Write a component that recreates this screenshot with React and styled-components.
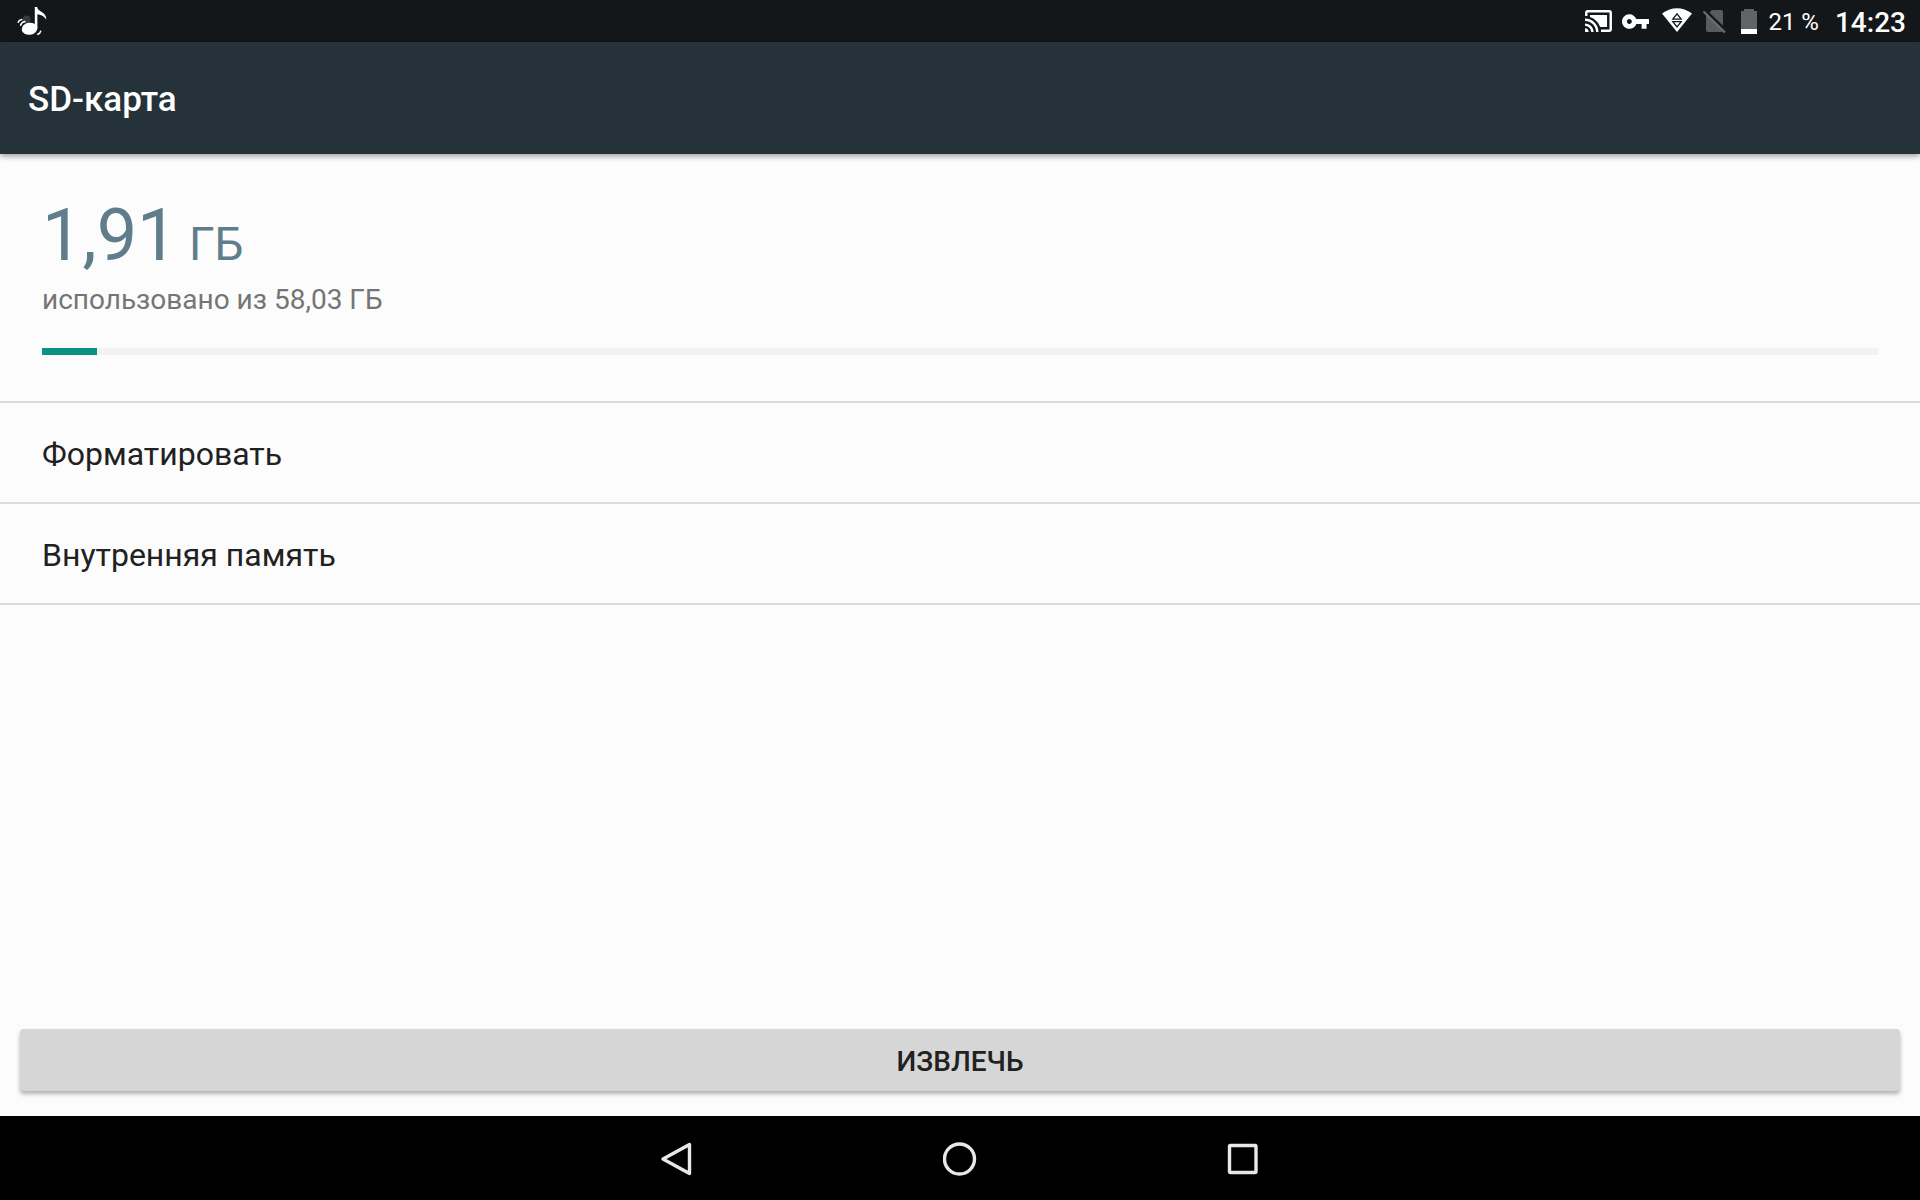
import React from 'react';
import styled, { createGlobalStyle } from 'styled-components';

const storage = {
  title: 'SD-карта',
  used: '1,91',
  unit: 'ГБ',
  summary: 'использовано из 58,03 ГБ',
  percent: 3
};

const actions = ['Форматировать', 'Внутренняя память'];

const App = () => (
  <Screen>
    <GlobalStyle />
    <StatusBar>
      <NoteIcon />
      <StatusIcons>
        <CastIcon />
        <KeyIcon />
        <WifiIcon />
        <NoSimIcon />
        <BatteryIcon />
        <BatteryLevel>21 %</BatteryLevel>
        <Clock>14:23</Clock>
      </StatusIcons>
    </StatusBar>
    <AppBar>
      <Title>{storage.title}</Title>
    </AppBar>
    <Content>
      <Usage>
        <UsedSize>
          {storage.used}
          <Unit> {storage.unit}</Unit>
        </UsedSize>
        <Summary id="usage-summary">{storage.summary}</Summary>
        <Track
          role="progressbar"
          aria-labelledby="usage-summary"
          aria-valuenow={storage.percent}
          aria-valuemin={0}
          aria-valuemax={100}
        >
          <Fill style={{ width: `${storage.percent}%` }} />
        </Track>
      </Usage>
      <ActionList>
        {actions.map(action => (
          <ActionItem key={action}>
            <ActionButton type="button">{action}</ActionButton>
          </ActionItem>
        ))}
      </ActionList>
    </Content>
    <Footer>
      <EjectButton type="button">Извлечь</EjectButton>
    </Footer>
    <NavBar>
      <NavButton type="button" aria-label="Назад">
        <svg width="34" height="34" viewBox="0 0 34 34">
          <path d="M29.500 2.500V31.500L3 17Z" />
        </svg>
      </NavButton>
      <NavButton type="button" aria-label="Домой">
        <svg width="34" height="34" viewBox="0 0 34 34">
          <circle cx="16.500" cy="17" r="15" />
        </svg>
      </NavButton>
      <NavButton type="button" aria-label="Недавние">
        <svg width="34" height="34" viewBox="0 0 34 34">
          <rect x="3.500" y="3.500" width="26.500" height="27" rx="1" />
        </svg>
      </NavButton>
    </NavBar>
  </Screen>
);

export default App;

const NoteIcon = () => (
  <svg width="30" height="30" viewBox="0 0 30 30" fill="#fff" aria-hidden="true">
    <circle cx="9.500" cy="13.500" r="4" fill="#34393c" />
    <ellipse cx="12.500" cy="22.800" rx="7.800" ry="6" transform="rotate(-8 12.500 22.800)" />
    <path d="M17.800 1H20.200C20.600 6 29.500 5.500 29.300 13.500C26.500 9.800 23.500 8.500 20.400 8.300V23H17.800Z" />
    <path
      d="M1.200 16.200Q2 13.800 4.800 13.400M3.600 19.200Q4.600 16.200 8 15.600M20.800 28.200Q23.200 27.600 23.700 25.200"
      fill="none"
      stroke="#fff"
      strokeWidth="1.500"
      strokeLinecap="round"
    />
  </svg>
);

const CastIcon = () => (
  <svg width="27" height="22" viewBox="1 3 22 18" fill="#fff" aria-hidden="true">
    <path d="M1 18v3h3c0-1.660-1.340-3-3-3zm0-4v2c2.760 0 5 2.240 5 5h2c0-3.870-3.130-7-7-7zm18-7H5v1.630c3.960 1.280 7.090 4.410 8.370 8.370H19V7zM1 10v2c4.970 0 9 4.030 9 9h2c0-6.080-4.930-11-11-11zm20-7H3c-1.100 0-2 .9-2 2v3h2V5h18v14h-7v2h7c1.100 0 2-.9 2-2V5c0-1.100-.9-2-2-2z" />
  </svg>
);

const KeyIcon = () => (
  <svg width="27" height="15" viewBox="1 6 22 12" fill="#fff" aria-hidden="true">
    <path d="M12.650 10C11.830 7.670 9.610 6 7 6c-3.310 0-6 2.690-6 6s2.690 6 6 6c2.610 0 4.830-1.670 5.650-4H17v4h4v-4h2v-4H12.650zM7 14c-1.100 0-2-.9-2-2s.9-2 2-2 2 .9 2 2-.9 2-2 2z" />
  </svg>
);

const WifiIcon = () => (
  <svg width="34" height="26" viewBox="-3 0 34 26" aria-hidden="true">
    <path d="M15 24L0 5.500Q15 -5 30 5.500Z" fill="#fff" />
    <path
      d="M15 5.800L19.200 11.200H10.800ZM15 18.900L19.200 13.600H10.800Z"
      fill="none"
      stroke="#13171a"
      strokeWidth="1.300"
    />
  </svg>
);

const NoSimIcon = () => (
  <svg width="28" height="24" viewBox="0 0 28 24" aria-hidden="true">
    <path
      d="M9 1H18Q20 1 20 3V21Q20 23 18 23H5Q3 23 3 21V7Z"
      fill="#595c5e"
    />
    <path d="M1.500 0.500L24 22.500" stroke="#13171a" strokeWidth="2.600" />
    <path d="M0.500 2.500L22 23.500" stroke="#6c6f71" strokeWidth="2.200" />
  </svg>
);

const BatteryIcon = () => (
  <svg width="17" height="25" viewBox="0 0 17 25" aria-hidden="true">
    <path d="M3 0H13V2H16V20H0V2H3Z" fill="#616365" />
    <path d="M0 20H16V25H0Z" fill="#fff" />
  </svg>
);

const GlobalStyle = createGlobalStyle`
  * {
    box-sizing: border-box;
  }

  body {
    margin: 0;
    font-family: Roboto, sans-serif;
    color: #212121;
    background: #fcfcfc;
  }

  button {
    border: 0;
    font-family: inherit;
    color: inherit;
    cursor: pointer;
  }
`;

const Screen = styled.div`
  display: flex;
  flex-direction: column;
  min-height: 100vh;
`;

const StatusBar = styled.div`
  display: flex;
  align-items: center;
  justify-content: space-between;
  height: 42px;
  padding: 0 14px 0 17px;
  color: #fff;
  background: #13171a;
`;

const StatusIcons = styled.div`
  display: flex;
  align-items: center;
  gap: 10px;
`;

const BatteryLevel = styled.span`
  padding-top: 2px;
  font-size: 24px;
`;

const Clock = styled.span`
  margin-left: 6px;
  padding-top: 2px;
  font-size: 28px;
  font-weight: 500;
`;

const AppBar = styled.header`
  display: flex;
  align-items: center;
  height: 112px;
  padding: 2px 28px 0;
  color: #fff;
  background: #263239;
  box-shadow: 0 2px 6px rgba(0, 0, 0, 0.4);
`;

const Title = styled.h1`
  margin: 0;
  font-size: 35px;
  font-weight: 500;
`;

const Content = styled.main`
  flex: 1;
`;

const Usage = styled.section`
  padding: 40px 42px 46px;
  border-bottom: 2px solid #dcdcdc;
`;

const UsedSize = styled.div`
  font-size: 72px;
  line-height: 84px;
  color: #607d8b;
`;

const Unit = styled.span`
  font-size: 46px;
  line-height: 1;
`;

const Summary = styled.div`
  margin: 2px 0 28px;
  font-size: 28px;
  line-height: 40px;
  color: #757575;
`;

const Track = styled.div`
  height: 7px;
  background: #f2f2f2;
`;

const Fill = styled.div`
  height: 100%;
  background: #0a9385;
`;

const ActionList = styled.ul`
  margin: 0;
  padding: 0;
  list-style: none;
`;

const ActionItem = styled.li`
  border-bottom: 2px solid #dcdcdc;
`;

const ActionButton = styled.button`
  display: block;
  width: 100%;
  padding: 31px 42px 28px;
  font-size: 32px;
  line-height: 40px;
  text-align: left;
  background: none;
`;

const Footer = styled.footer`
  display: flex;
  padding: 20px 20px 25px;
`;

const EjectButton = styled.button`
  flex: 1;
  height: 62px;
  padding: 2px 0 0;
  border-radius: 4px;
  font-size: 28px;
  font-weight: 500;
  text-transform: uppercase;
  background: #d6d6d6;
  box-shadow: 0 3px 4px rgba(0, 0, 0, 0.3);
`;

const NavBar = styled.nav`
  display: flex;
  justify-content: center;
  gap: 108px;
  height: 84px;
  padding-top: 1px;
  background: #000;
`;

const NavButton = styled.button`
  display: flex;
  align-items: center;
  justify-content: center;
  width: 175px;
  background: none;

  svg {
    fill: none;
    stroke: #e8e8e8;
    stroke-width: 3.4;
    stroke-linejoin: round;
  }
`;
